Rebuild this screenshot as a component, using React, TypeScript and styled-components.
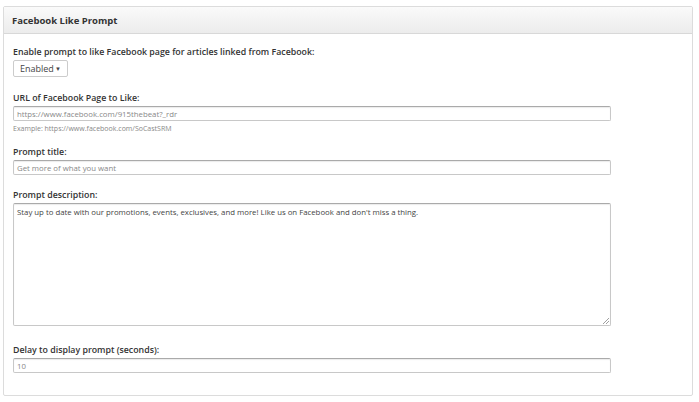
import React from "react";
import styled, { createGlobalStyle } from "styled-components";

const G = createGlobalStyle`
  body { margin: 0; background: #fff; font-family: "Open Sans", sans-serif; }
`;
const Panel = styled.div`
  margin: 6px 6px 0 3px; border: 1px solid #dcdcdc; border-radius: 2px; height: 390px; box-sizing: border-box;
`;
const Header = styled.div`
  height: 27px; box-sizing: border-box; padding: 0 8px; display: flex; align-items: center;
  background: linear-gradient(#fafafa, #ececec); border-bottom: 1px solid #d8d8d8;
  font-size: 9.5px; font-weight: 700; color: #333;
`;
const Body = styled.div` padding: 13px 10px 0 9px; display: flex; flex-direction: column; `;
const Field = styled.div<{ mb: number }>` display: flex; flex-direction: column; margin-bottom: ${p => p.mb}px; `;
const Label = styled.label` font-size: 8.8px; font-weight: 600; color: #333; margin-bottom: 2px; line-height: 11px; `;
const Select = styled.div`
  width: 55px; height: 17px; box-sizing: border-box; border: 1px solid #ccc; border-radius: 2px;
  display: flex; align-items: center; justify-content: space-between; padding: 0 6px 0 6px;
  font-size: 9px; color: #444;
`;
const Input = styled.div<{ h?: number }>`
  width: 598px; height: ${p => p.h ?? 15}px; box-sizing: border-box; border: 1px solid #c8c8c8; border-top-color: #aaa;
  border-radius: 2px; padding: ${p => p.h ? "3px" : "0"} 3px; font-size: 7.8px; color: #888; display: flex;
  align-items: ${p => p.h ? "flex-start" : "center"}; position: relative; box-shadow: inset 0 1px 1px rgba(0,0,0,.08);
`;
const Dark = styled.span` color: #444; `;
const Help = styled.div` font-size: 7px; color: #888; margin-top: 3px; line-height: 10px; `;
const Grip = styled.svg` position: absolute; right: 1px; bottom: 1px; `;

export default function App() {
  return (
    <>
      <G />
      <Panel>
        <Header>Facebook Like Prompt</Header>
        <Body>
          <Field mb={16}>
            <Label>Enable prompt to like Facebook page for articles linked from Facebook:</Label>
            <Select>Enabled <span style={{ fontSize: 6 }}>▼</span></Select>
          </Field>
          <Field mb={13}>
            <Label>URL of Facebook Page to Like:</Label>
            <Input>https://www.facebook.com/915thebeat?_rdr</Input>
            <Help>Example: https://www.facebook.com/SoCastSRM</Help>
          </Field>
          <Field mb={15}>
            <Label>Prompt title:</Label>
            <Input>Get more of what you want</Input>
          </Field>
          <Field mb={19}>
            <Label>Prompt description:</Label>
            <Input h={123}><Dark>Stay up to date with our promotions, events, exclusives, and more! Like us on Facebook and don't miss a thing.</Dark>
              <Grip width="6" height="6" viewBox="0 0 6 6"><path d="M6 0L0 6M6 3L3 6" stroke="#888" strokeWidth="0.8" /></Grip>
            </Input>
          </Field>
          <Field mb={0}>
            <Label>Delay to display prompt (seconds):</Label>
            <Input>10</Input>
          </Field>
        </Body>
      </Panel>
    </>
  );
}
